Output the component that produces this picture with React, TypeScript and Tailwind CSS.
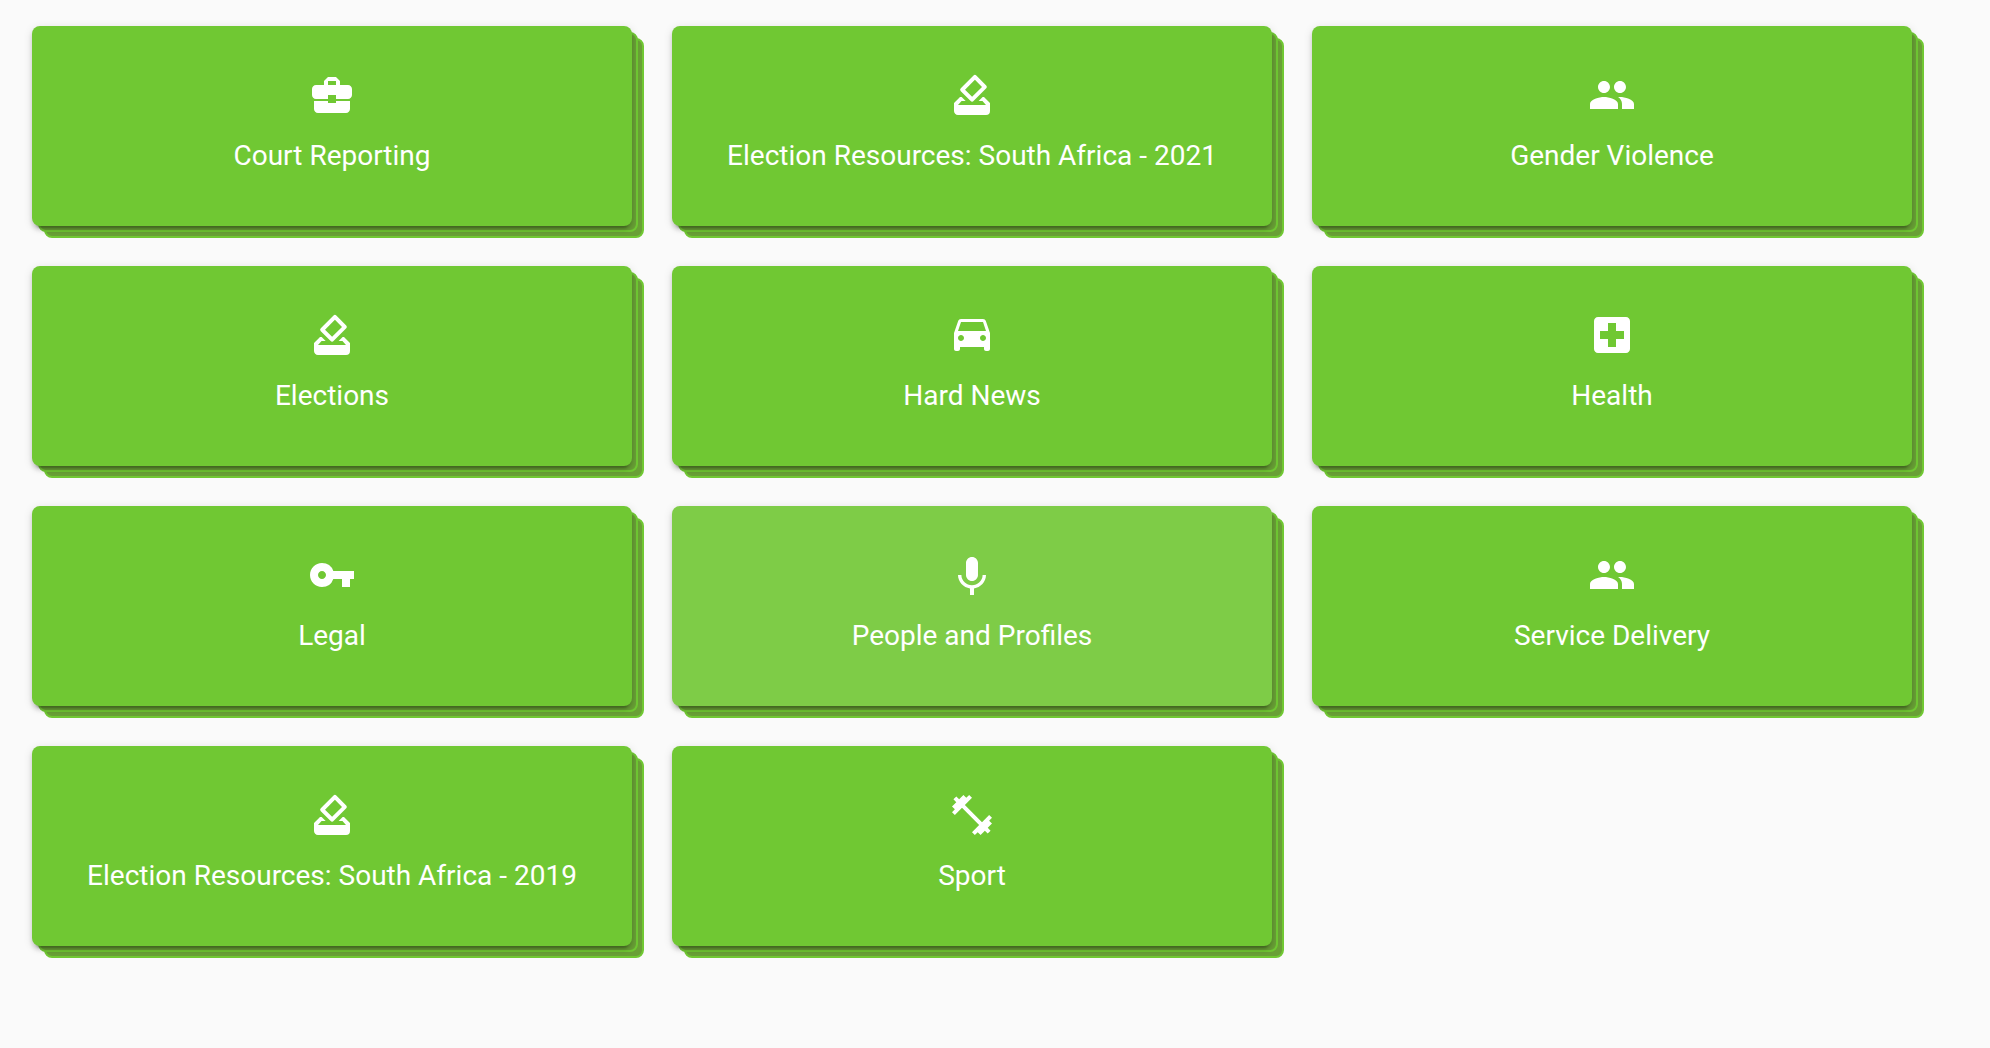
import type { SVGProps } from "react";
import {
  MdBusinessCenter,
  MdFitnessCenter,
  MdHowToVote,
  MdLocalHospital,
  MdPeople,
  MdVpnKey,
} from "react-icons/md";

function CarIcon(props: SVGProps<SVGSVGElement>) {
  return (
    <svg viewBox="0 0 24 24" fill="currentColor" {...props}>
      <path d="M18.92 5.01C18.72 4.42 18.16 4 17.5 4h-11c-.66 0-1.21.42-1.42 1.01L3 11v8c0 .55.45 1 1 1h1c.55 0 1-.45 1-1v-1h12v1c0 .55.45 1 1 1h1c.55 0 1-.45 1-1v-8l-2.08-5.99zM6.5 15c-.83 0-1.5-.67-1.5-1.5S5.67 12 6.5 12s1.5.67 1.5 1.5S7.33 15 6.5 15zm11 0c-.83 0-1.5-.67-1.5-1.5s.67-1.5 1.5-1.5 1.5.67 1.5 1.5-.67 1.5-1.5 1.5zM5 10l1.5-4.5h11L19 10H5z" />
    </svg>
  );
}

function VoiceIcon(props: SVGProps<SVGSVGElement>) {
  return (
    <svg viewBox="0 0 24 24" fill="currentColor" {...props}>
      <path d="M12 15c1.66 0 2.99-1.34 2.99-3L15 6c0-1.66-1.34-3-3-3S9 4.34 9 6v6c0 1.66 1.34 3 3 3zm5.3-3c0 3-2.54 5.1-5.3 5.1S6.7 15 6.7 12H5c0 3.42 2.72 6.23 6 6.72V22h2v-3.28c3.28-.49 6-3.3 6-6.72h-1.7z" />
    </svg>
  );
}

const topics = [
  { title: "Court Reporting", icon: MdBusinessCenter },
  { title: "Election Resources: South Africa - 2021", icon: MdHowToVote },
  { title: "Gender Violence", icon: MdPeople },
  { title: "Elections", icon: MdHowToVote },
  { title: "Hard News", icon: CarIcon },
  { title: "Health", icon: MdLocalHospital },
  { title: "Legal", icon: MdVpnKey },
  { title: "People and Profiles", icon: VoiceIcon, active: true },
  { title: "Service Delivery", icon: MdPeople },
  { title: "Election Resources: South Africa - 2019", icon: MdHowToVote },
  { title: "Sport", icon: MdFitnessCenter },
];

export default function App() {
  return (
    <main className="min-h-screen bg-[#fafafa] pt-[26px] pb-10 pl-8 pr-[78px] font-['Roboto',sans-serif]">
      <div className="grid grid-cols-1 md:grid-cols-2 xl:grid-cols-3 gap-10">
        {topics.map((t) => {
          const Icon = t.icon;
          return (
            <div key={t.title} className="relative isolate">
              {/* stacked sheets behind the card */}
              <div className="absolute inset-0 -z-10 translate-x-3 translate-y-3 rounded-lg border-2 border-[#70c833] bg-[#69a036]" />
              <div className="absolute inset-0 -z-10 translate-x-[6px] translate-y-[6px] rounded-lg border-2 border-[#70c833] bg-[#69a036]" />
              <button
                type="button"
                className={`flex w-full min-h-[200px] flex-col items-center gap-[17px] rounded-lg px-4 pt-[45px] pb-6 text-white cursor-pointer shadow-[0_6px_2px_-4px_rgba(0,0,0,0.2),0_4px_4px_0_rgba(0,0,0,0.14),0_2px_10px_0_rgba(0,0,0,0.12)] hover:bg-[#7ecc47] ${
                  t.active ? "bg-[#7ecc47]" : "bg-[#70c833]"
                }`}
              >
                <Icon className="h-12 w-12" />
                <span className="text-[28px] leading-10">{t.title}</span>
              </button>
            </div>
          );
        })}
      </div>
    </main>
  );
}
